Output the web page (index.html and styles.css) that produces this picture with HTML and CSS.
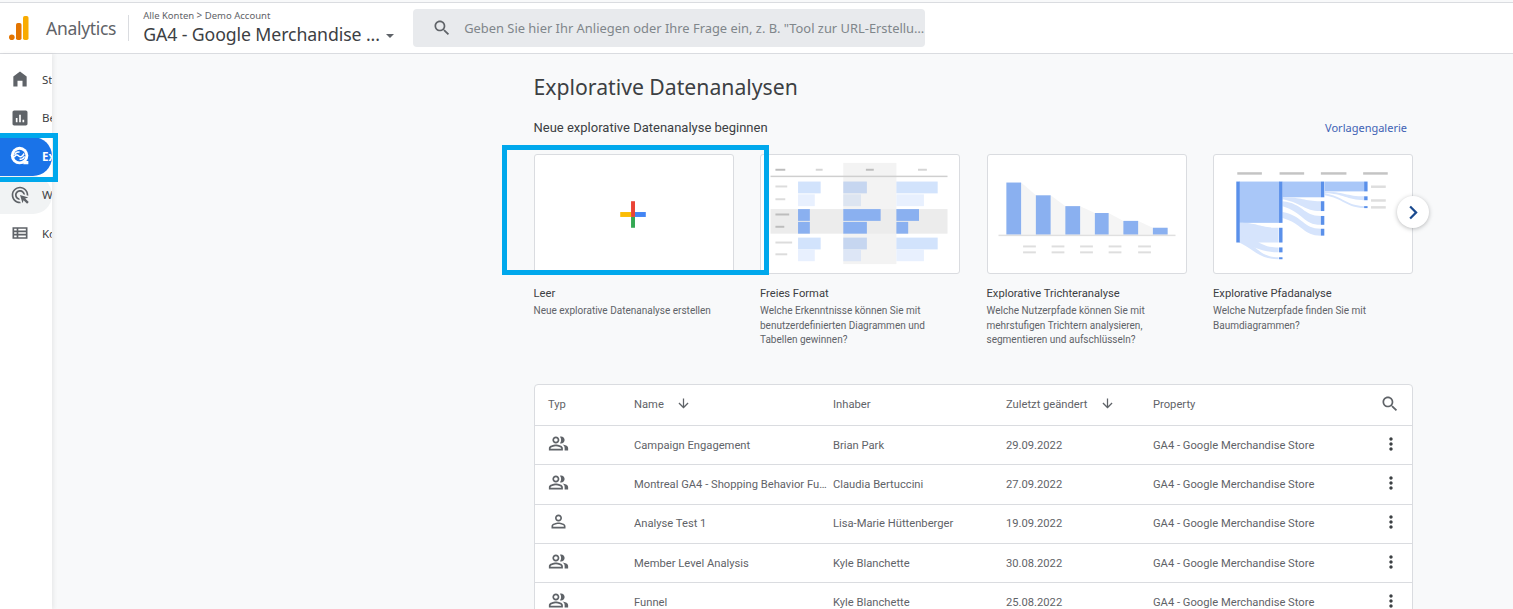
FILE: index.html
```html
<!DOCTYPE html>
<html lang="de">
<head>
    <meta charset="UTF-8">
    <meta name="viewport" content="width=device-width, initial-scale=1.0">
    <title>Explorative Datenanalysen</title>
    <link rel="stylesheet" href="styles.css">
</head>
<body>

<svg class="sprite" width="0" height="0">
    <symbol id="i-people" viewBox="0 0 24 24"><path d="M16.67 13.13C18.04 14.06 19 15.32 19 17v3h4v-3c0-2.18-3.57-3.47-6.33-3.87zM15 12c2.21 0 4-1.79 4-4s-1.79-4-4-4c-.47 0-.91.1-1.33.24C14.5 5.27 15 6.58 15 8s-.5 2.73-1.33 3.76c.42.14.86.24 1.33.24zM9 12c2.21 0 4-1.79 4-4s-1.79-4-4-4-4 1.79-4 4 1.79 4 4 4zm0-6c1.1 0 2 .9 2 2s-.9 2-2 2-2-.9-2-2 .9-2 2-2zM9 13c-2.67 0-8 1.34-8 4v3h16v-3c0-2.66-5.33-4-8-4zm6 5H3v-.99C3.2 16.29 6.3 15 9 15s5.8 1.29 6 2z"/></symbol>
    <symbol id="i-person" viewBox="0 0 24 24"><path d="M12 5.9c1.16 0 2.1.94 2.1 2.1s-.94 2.1-2.1 2.1S9.9 9.16 9.9 8s.94-2.1 2.1-2.1m0 9c2.97 0 6.1 1.46 6.1 2.1v1.1H5.9V17c0-.64 3.13-2.1 6.1-2.1M12 4C9.79 4 8 5.79 8 8s1.79 4 4 4 4-1.79 4-4-1.79-4-4-4zm0 9c-2.67 0-8 1.34-8 4v3h16v-3c0-2.66-5.33-4-8-4z"/></symbol>
    <symbol id="i-more" viewBox="0 0 24 24"><path d="M12 8c1.1 0 2-.9 2-2s-.9-2-2-2-2 .9-2 2 .9 2 2 2zm0 2c-1.1 0-2 .9-2 2s.9 2 2 2 2-.9 2-2-.9-2-2-2zm0 6c-1.1 0-2 .9-2 2s.9 2 2 2 2-.9 2-2-.9-2-2-2z"/></symbol>
    <symbol id="i-search" viewBox="0 0 24 24"><path d="M15.5 14h-.79l-.28-.27C15.41 12.59 16 11.11 16 9.5 16 5.91 13.09 3 9.5 3S3 5.91 3 9.5 5.91 16 9.5 16c1.61 0 3.09-.59 4.23-1.57l.27.28v.79l5 4.99L20.49 19l-4.99-5zm-6 0C7.01 14 5 11.99 5 9.5S7.01 5 9.5 5 14 7.01 14 9.5 11.99 14 9.5 14z"/></symbol>
    <symbol id="i-down" viewBox="0 0 24 24"><path d="M20 12l-1.41-1.41L13 16.17V4h-2v12.17l-5.58-5.59L4 12l8 8 8-8z"/></symbol>
</svg>

<header class="topbar">
    <svg class="logo" viewBox="0 0 20 24" width="20" height="24">
        <rect fill="#f9ab00" x="14" y="0" width="5.500" height="24" rx="1.800"/>
        <rect fill="#e37400" x="7" y="7" width="5.500" height="17" rx="1.800"/>
        <circle fill="#e37400" cx="2.800" cy="21.200" r="2.800"/>
    </svg>
    <span class="product">Analytics</span>
    <div class="property">
        <div class="crumbs">Alle Konten <span class="crumb-sep">&gt;</span> Demo Account</div>
        <div class="property-name">GA4 - Google Merchandise ... <span class="caret"></span></div>
    </div>
    <div class="searchbox">
        <svg class="icon searchbox-icon"><use href="#i-search"/></svg>
        <span class="searchbox-text">Geben Sie hier Ihr Anliegen oder Ihre Frage ein, z. B. "Tool zur URL-Erstellung für Kampagnen"</span>
    </div>
</header>

<div class="app">
    <nav class="sidenav">
        <a class="nav-item">
            <svg viewBox="0 0 24 24" class="nav-icon"><path d="M12 3 4 9v12h5v-7h6v7h5V9z"/></svg>
            <span>Startseite</span>
        </a>
        <a class="nav-item">
            <svg viewBox="0 0 24 24" class="nav-icon"><path d="M19 3H5c-1.100 0-2 .9-2 2v14c0 1.100.9 2 2 2h14c1.100 0 2-.9 2-2V5c0-1.100-.9-2-2-2zM9 17H7v-5h2v5zm4 0h-2V8h2v9zm4 0h-2v-3h2v3z"/></svg>
            <span>Berichte</span>
        </a>
        <a class="nav-item active">
            <svg viewBox="0 0 24 24" class="nav-icon">
                <circle cx="11.500" cy="11.500" r="10.500" fill="#fff"/>
                <path fill="#fff" d="M16 18h6v3.500a.5.5 0 0 1-.5.5H16z"/>
                <circle class="explore-core" cx="11.500" cy="11.500" r="7"/>
                <path class="explore-line" d="M5 13.500c2-3 3.500-3.500 5.500-1.500s4 1 6.500-3"/>
                <path class="explore-line" d="M5.500 10.500c1.500-3 4-4 6-3M17.500 12.500c-1.500 3-4 4-6 3"/>
            </svg>
            <span>Explorieren</span>
        </a>
        <a class="nav-item hovered">
            <svg viewBox="0 0 24 24" class="nav-icon"><path d="M11.710 17.990C8.530 17.840 6 15.220 6 12c0-3.310 2.690-6 6-6 3.220 0 5.840 2.530 5.990 5.710l-2.100-.63C15.480 9.310 13.890 8 12 8c-2.210 0-4 1.790-4 4 0 1.890 1.310 3.480 3.080 3.890l.63 2.100zM22 12c0 .3-.01.6-.04.9l-1.970-.59c.01-.1.01-.21.01-.31 0-4.420-3.580-8-8-8s-8 3.580-8 8 3.580 8 8 8c.1 0 .21 0 .31-.01l.59 1.970c-.3.03-.6.04-.9.04-5.520 0-10-4.480-10-10S6.480 2 12 2s10 4.480 10 10zm-3.770 4.260L22 15l-10-3 3 10 1.260-3.770 4.270 4.270 1.980-1.980-4.280-4.260z"/></svg>
            <span>Werbung</span>
        </a>
        <a class="nav-item">
            <svg viewBox="0 0 24 24" class="nav-icon"><path d="M3 5v14h18V5H3zm5 12H5v-2h3v2zm0-4H5v-2h3v2zm0-4H5V7h3v2zm11 8H10v-2h9v2zm0-4H10v-2h9v2zm0-4H10V7h9v2z"/></svg>
            <span>Konfigurieren</span>
        </a>
    </nav>

    <main class="content">
        <h1 class="page-title">Explorative Datenanalysen</h1>

        <div class="section-head">
            <span>Neue explorative Datenanalyse beginnen</span>
            <a class="gallery-link">Vorlagengalerie</a>
        </div>

        <div class="templates">
            <div class="template">
                <div class="thumb">
                    <svg viewBox="0 0 200 120">
                        <rect x="86" y="58" width="11" height="5" fill="#fbbc04"/>
                        <rect x="101" y="58" width="11" height="5" fill="#4285f4"/>
                        <rect x="97" y="47" width="4" height="16" fill="#ea4335"/>
                        <rect x="97" y="63" width="4" height="11" fill="#34a853"/>
                    </svg>
                </div>
                <h3>Leer</h3>
                <p>Neue explorative Datenanalyse erstellen</p>
            </div>

            <div class="template">
                <div class="thumb">
                    <svg viewBox="0 0 200 120">
                        <rect x="83" y="8" width="54" height="103" fill="#f3f3f3"/>
                        <rect x="9" y="55" width="180" height="25" fill="#ececec"/>
                        <g fill="#bdbdbd">
                            <rect x="14" y="14" width="10" height="2"/>
                            <rect x="55" y="14" width="7" height="2" fill="#d5d5d5"/>
                            <rect x="106" y="14" width="8" height="2"/>
                            <rect x="159" y="14" width="9" height="2" fill="#d5d5d5"/>
                            <rect x="9" y="21" width="180" height="1.500" fill="#cfcfcf"/>
                            <rect x="14" y="59.500" width="14" height="2"/>
                            <rect x="14" y="72" width="9" height="2"/>
                        </g>
                        <g fill="#dcdcdc">
                            <rect x="14" y="31" width="12" height="2"/>
                            <rect x="14" y="44" width="10" height="2"/>
                            <rect x="14" y="88" width="17" height="2"/>
                            <rect x="14" y="100" width="12" height="2"/>
                        </g>
                        <g fill="#d2e3fc">
                            <rect x="37" y="27" width="23" height="12"/>
                            <rect x="83" y="27" width="24" height="12" fill="#c6d6f0"/>
                            <rect x="137" y="27" width="42" height="12"/>
                            <rect x="37" y="84" width="23" height="12"/>
                            <rect x="83" y="84" width="24" height="12" fill="#c6d6f0"/>
                            <rect x="137" y="84" width="42" height="12"/>
                        </g>
                        <g fill="#e8f0fe">
                            <rect x="37" y="40" width="17" height="12"/>
                            <rect x="83" y="40" width="18" height="12" fill="#dde5f1"/>
                            <rect x="137" y="40" width="28" height="12"/>
                            <rect x="37" y="96" width="17" height="12"/>
                            <rect x="83" y="96" width="18" height="12" fill="#dde6f6"/>
                            <rect x="137" y="96" width="28" height="12"/>
                        </g>
                        <g fill="#8ab0f0">
                            <rect x="37" y="55" width="12" height="12"/>
                            <rect x="83" y="55" width="38" height="12"/>
                            <rect x="137" y="55" width="23" height="12"/>
                            <rect x="37" y="68" width="12" height="12"/>
                            <rect x="83" y="68" width="24" height="12"/>
                            <rect x="137" y="68" width="12" height="12"/>
                        </g>
                    </svg>
                </div>
                <h3>Freies Format</h3>
                <p>Welche Erkenntnisse können Sie mit benutzerdefinierten Diagrammen und Tabellen gewinnen?</p>
            </div>

            <div class="template">
                <div class="thumb">
                    <svg viewBox="0 0 200 120">
                        <path fill="#f5f5f5" d="M33 28 48 41H63L78 52H93L108 59H122L137 67H152L167 74H182V81H33z"/>
                        <g fill="#8ab0f0">
                            <rect x="18" y="28" width="15" height="53"/>
                            <rect x="48" y="41" width="15" height="40"/>
                            <rect x="78" y="52" width="15" height="29"/>
                            <rect x="108" y="59" width="14" height="22"/>
                            <rect x="137" y="67" width="15" height="14"/>
                            <rect x="167" y="74" width="15" height="7"/>
                        </g>
                        <rect x="10" y="81" width="180" height="1.500" fill="#e0e0e0"/>
                        <g fill="#dedede">
                            <rect x="35" y="92" width="13" height="2"/><rect x="35" y="98" width="13" height="2"/>
                            <rect x="64" y="92" width="13" height="2"/><rect x="64" y="98" width="13" height="2"/>
                            <rect x="93" y="92" width="13" height="2"/><rect x="93" y="98" width="13" height="2"/>
                            <rect x="122" y="92" width="13" height="2"/><rect x="122" y="98" width="13" height="2"/>
                            <rect x="152" y="92" width="13" height="2"/><rect x="152" y="98" width="13" height="2"/>
                        </g>
                    </svg>
                </div>
                <h3>Explorative Trichteranalyse</h3>
                <p>Welche Nutzerpfade können Sie mit mehrstufigen Trichtern analysieren, segmentieren und aufschlüsseln?</p>
            </div>

            <div class="template">
                <div class="thumb">
                    <svg viewBox="0 0 200 120">
                        <g fill="#c4c4c4">
                            <rect x="23" y="17.500" width="25" height="2.500"/>
                            <rect x="66" y="17.500" width="25" height="2.500"/>
                            <rect x="108" y="17.500" width="26" height="2.500"/>
                            <rect x="151" y="17.500" width="25" height="2.500"/>
                        </g>
                        <g fill="#a9c7f8">
                            <rect x="25" y="27" width="41" height="42"/>
                            <rect x="69" y="27" width="39" height="16"/>
                            <rect x="112" y="27" width="40" height="10"/>
                        </g>
                        <g fill="#d6e4fc">
                            <path d="M25 69C45 69 45 74 65 74V89H25z"/>
                            <path d="M25 82C45 84 45 94 65 94V99C45 99 40 92 25 89z"/>
                            <path d="M25 86C45 92 45 104 65 104V106C45 106 40 96 25 89z"/>
                            <path d="M69 43C90 43 90 47 108 47V57C90 57 90 49 69 45z"/>
                            <path d="M69 47C90 49 90 62 108 62V71C90 71 90 58 69 52z"/>
                            <path d="M69 58C90 62 90 75 108 75V82C90 82 90 70 69 64z"/>
                            <path d="M112 37C130 37 135 42 152 42V46C135 46 130 39 112 39z"/>
                            <path d="M112 39C130 42 135 52 152 52V54C135 54 130 44 112 41z"/>
                        </g>
                        <g fill="#5a90ea">
                            <rect x="22" y="27" width="3.500" height="62"/>
                            <rect x="65.500" y="27" width="3.500" height="42"/>
                            <rect x="65.500" y="74" width="3.500" height="15"/>
                            <rect x="65.500" y="94" width="3.500" height="5"/>
                            <rect x="65.500" y="104" width="3.500" height="2"/>
                            <rect x="108" y="27" width="3.500" height="16"/>
                            <rect x="108" y="47" width="3.500" height="10"/>
                            <rect x="108" y="62" width="3.500" height="9"/>
                            <rect x="108" y="75" width="3.500" height="7"/>
                            <rect x="152" y="27" width="3.500" height="10"/>
                            <rect x="152" y="42" width="3.500" height="4"/>
                            <rect x="152" y="52" width="3.500" height="2"/>
                        </g>
                        <g fill="#dedede">
                            <rect x="159" y="31" width="15" height="2.500"/>
                            <rect x="159" y="45" width="15" height="2.500"/>
                            <rect x="159" y="52" width="15" height="2.500"/>
                        </g>
                    </svg>
                </div>
                <h3>Explorative Pfadanalyse</h3>
                <p>Welche Nutzerpfade finden Sie mit Baumdiagrammen?</p>
            </div>

            <button class="next-btn">
                <svg viewBox="0 0 24 24" width="27" height="27"><path d="M9.700 6 8.300 7.400 12.900 12l-4.600 4.600L9.700 18l6-6z"/></svg>
            </button>
        </div>

        <section class="table">
            <div class="row head">
                <div>Typ</div>
                <div>Name <svg class="icon sort"><use href="#i-down"/></svg></div>
                <div>Inhaber</div>
                <div>Zuletzt geändert <svg class="icon sort"><use href="#i-down"/></svg></div>
                <div>Property</div>
                <div class="cell-end"><svg class="icon search"><use href="#i-search"/></svg></div>
            </div>
            <div class="row">
                <div><svg class="icon type"><use href="#i-people"/></svg></div>
                <div class="name">Campaign Engagement</div>
                <div>Brian Park</div>
                <div>29.09.2022</div>
                <div>GA4 - Google Merchandise Store</div>
                <div class="cell-end"><svg class="icon more"><use href="#i-more"/></svg></div>
            </div>
            <div class="row">
                <div><svg class="icon type"><use href="#i-people"/></svg></div>
                <div class="name">Montreal GA4 - Shopping Behavior Funnel</div>
                <div>Claudia Bertuccini</div>
                <div>27.09.2022</div>
                <div>GA4 - Google Merchandise Store</div>
                <div class="cell-end"><svg class="icon more"><use href="#i-more"/></svg></div>
            </div>
            <div class="row">
                <div><svg class="icon type"><use href="#i-person"/></svg></div>
                <div class="name">Analyse Test 1</div>
                <div>Lisa-Marie Hüttenberger</div>
                <div>19.09.2022</div>
                <div>GA4 - Google Merchandise Store</div>
                <div class="cell-end"><svg class="icon more"><use href="#i-more"/></svg></div>
            </div>
            <div class="row">
                <div><svg class="icon type"><use href="#i-people"/></svg></div>
                <div class="name">Member Level Analysis</div>
                <div>Kyle Blanchette</div>
                <div>30.08.2022</div>
                <div>GA4 - Google Merchandise Store</div>
                <div class="cell-end"><svg class="icon more"><use href="#i-more"/></svg></div>
            </div>
            <div class="row">
                <div><svg class="icon type"><use href="#i-people"/></svg></div>
                <div class="name">Funnel</div>
                <div>Kyle Blanchette</div>
                <div>25.08.2022</div>
                <div>GA4 - Google Merchandise Store</div>
                <div class="cell-end"><svg class="icon more"><use href="#i-more"/></svg></div>
            </div>
        </section>
    </main>
</div>

<!-- blue marker frames drawn over the screenshot -->
<div class="marker marker-nav"></div>
<div class="marker marker-card"></div>

</body>
</html>
```

FILE: styles.css
```css
html, body {
    height: 100%;
    margin: 0;
    overflow: hidden;
}

body {
    position: relative;
    display: flex;
    flex-direction: column;
    font-family: "Noto Sans", Arial, sans-serif;
    background-color: #f8f9fa;
    color: #3c4043;
    padding-top: 2px;
    box-sizing: border-box;
}

.sprite {
    position: absolute;
}

.icon {
    fill: #5f6368;
}

/* top bar */
.topbar {
    display: flex;
    align-items: center;
    flex: none;
    height: 50px;
    padding-left: 9px;
    background-color: #fff;
    border-top: 1px solid #dadce0;
    border-bottom: 1px solid #dadce0;
}

.logo {
    flex: none;
    margin-right: 17px;
}

.product {
    font-size: 17.500px;
    color: #5f6368;
    padding-right: 12px;
    letter-spacing: -0.3px;
}

.property {
    flex: none;
    box-sizing: border-box;
    width: 285px;
    height: 26px;
    padding-left: 14px;
    border-left: 1px solid #dadce0;
    display: flex;
    flex-direction: column;
    justify-content: center;
}

.crumbs {
    font-size: 9.500px;
    line-height: 12px;
    margin-top: -2px;
    color: #5f6368;
    white-space: nowrap;
}

.crumb-sep {
    font-size: 10px;
}

.property-name {
    font-size: 17.700px;
    line-height: 24px;
    color: #3c4043;
    white-space: nowrap;
    letter-spacing: -0.1px;
}

.caret {
    display: inline-block;
    margin-left: 2px;
    vertical-align: middle;
    border-left: 4.500px solid transparent;
    border-right: 4.500px solid transparent;
    border-top: 4.500px solid #5f6368;
}

.searchbox {
    display: flex;
    align-items: center;
    flex: none;
    width: 512px;
    height: 38px;
    padding-left: 19px;
    box-sizing: border-box;
    background-color: #e8eaed;
    border-radius: 4px;
}

.searchbox-icon {
    flex: none;
    width: 20px;
    height: 20px;
    margin-right: 12px;
}

.searchbox-text {
    font-size: 12.900px;
    color: #80868b;
    white-space: nowrap;
    overflow: hidden;
    text-overflow: ellipsis;
}

/* main area */
.app {
    display: flex;
    flex: 1;
    min-height: 0;
}

/* side navigation */
.sidenav {
    flex: none;
    width: 52px;
    padding-top: 6px;
    background-color: #fff;
    box-shadow: 2px 0 4px rgba(60, 64, 67, 0.08);
    overflow: hidden;
}

.nav-item {
    display: flex;
    align-items: center;
    gap: 12px;
    height: 38.500px;
    width: 52px;
    padding-left: 10px;
    box-sizing: border-box;
    font-size: 11.500px;
    color: #3c4043;
    white-space: nowrap;
    overflow: hidden;
    border-radius: 0 19px 19px 0;
}

.nav-icon {
    flex: none;
    width: 20px;
    height: 20px;
    fill: #5f6368;
}

.nav-item.active {
    background-color: #1a73e8;
    color: #fff;
    font-weight: 700;
}

.explore-core {
    fill: #1a73e8;
}

.explore-line {
    fill: none;
    stroke: #fff;
    stroke-width: 1.800;
}

.nav-item.hovered {
    background-color: #f1f3f4;
}

/* content column */
.content {
    width: 879.500px;
    margin-left: 481.500px;
    flex: none;
}

.page-title {
    margin: 18px 0 0;
    font-size: 21.200px;
    font-weight: 400;
    line-height: 30px;
    color: #3c4043;
}

.section-head {
    display: flex;
    justify-content: space-between;
    align-items: center;
    margin-top: 17px;
    padding-right: 6px;
    font-family: Roboto, Arial, sans-serif;
    font-size: 13px;
    line-height: 18px;
}

.gallery-link {
    font-family: "Noto Sans", Arial, sans-serif;
    font-size: 11px;
    color: #3f62b4;
}

/* template cards */
.templates {
    position: relative;
    display: flex;
    gap: 26.500px;
    margin-top: 17px;
    height: 230px;
}

.template {
    flex: none;
    width: 200px;
    font-family: Roboto, Arial, sans-serif;
}

.template h3 {
    margin: 12px 0 0;
    font-size: 11.200px;
    font-weight: 400;
    line-height: 15px;
    color: #3c4043;
}

.template p {
    margin: 3px 0 0;
    font-size: 10px;
    line-height: 14.500px;
    color: #5f6368;
}

.thumb {
    height: 118px;
    background-color: #fff;
    border: 1px solid #dadce0;
    border-radius: 3px;
}

.thumb svg {
    display: block;
    width: 100%;
    height: 100%;
}

.next-btn {
    position: absolute;
    top: 42px;
    right: -16px;
    display: flex;
    align-items: center;
    justify-content: center;
    width: 32px;
    height: 32px;
    padding: 0;
    border: none;
    border-radius: 50%;
    background-color: #fff;
    box-shadow: 0 1px 4px rgba(60, 64, 67, 0.35);
}

.next-btn svg {
    fill: #1a4a8f;
}

/* table */
.table {
    background-color: #fff;
    border: 1px solid #dadce0;
    border-radius: 4px 4px 0 0;
}

.row {
    display: grid;
    grid-template-columns: 86px 199px 173px 147px 1fr 46px;
    align-items: center;
    height: 39.300px;
    padding-left: 13.500px;
    box-sizing: border-box;
    border-top: 1px solid #dadce0;
    font-family: Roboto, Arial, sans-serif;
    font-size: 11.200px;
    color: #5f6368;
}

.row.head {
    height: 40px;
    padding-bottom: 2px;
    border-top: none;
}

.row > div {
    display: flex;
    align-items: center;
    min-width: 0;
    white-space: nowrap;
}

.row > .name {
    display: block;
    overflow: hidden;
    text-overflow: ellipsis;
    padding-right: 3px;
}

.sort {
    width: 15px;
    height: 15px;
    margin-left: 12px;
    margin-top: -2px;
}

.type {
    width: 21px;
    height: 21px;
    margin-top: -4px;
}

.cell-end {
    justify-content: center;
}

.search {
    width: 20px;
    height: 20px;
    margin-left: 1px;
}

.more {
    width: 20px;
    height: 20px;
    fill: #3c4043;
    margin-top: -3px;
    margin-left: 4px;
}

/* marker frames */
.marker {
    position: absolute;
    border: 5px solid #00a8ec;
    box-sizing: border-box;
}

.marker-nav {
    left: -5px;
    top: 133px;
    width: 63px;
    height: 49px;
}

.marker-card {
    left: 502px;
    top: 145px;
    width: 267px;
    height: 130px;
}
```
